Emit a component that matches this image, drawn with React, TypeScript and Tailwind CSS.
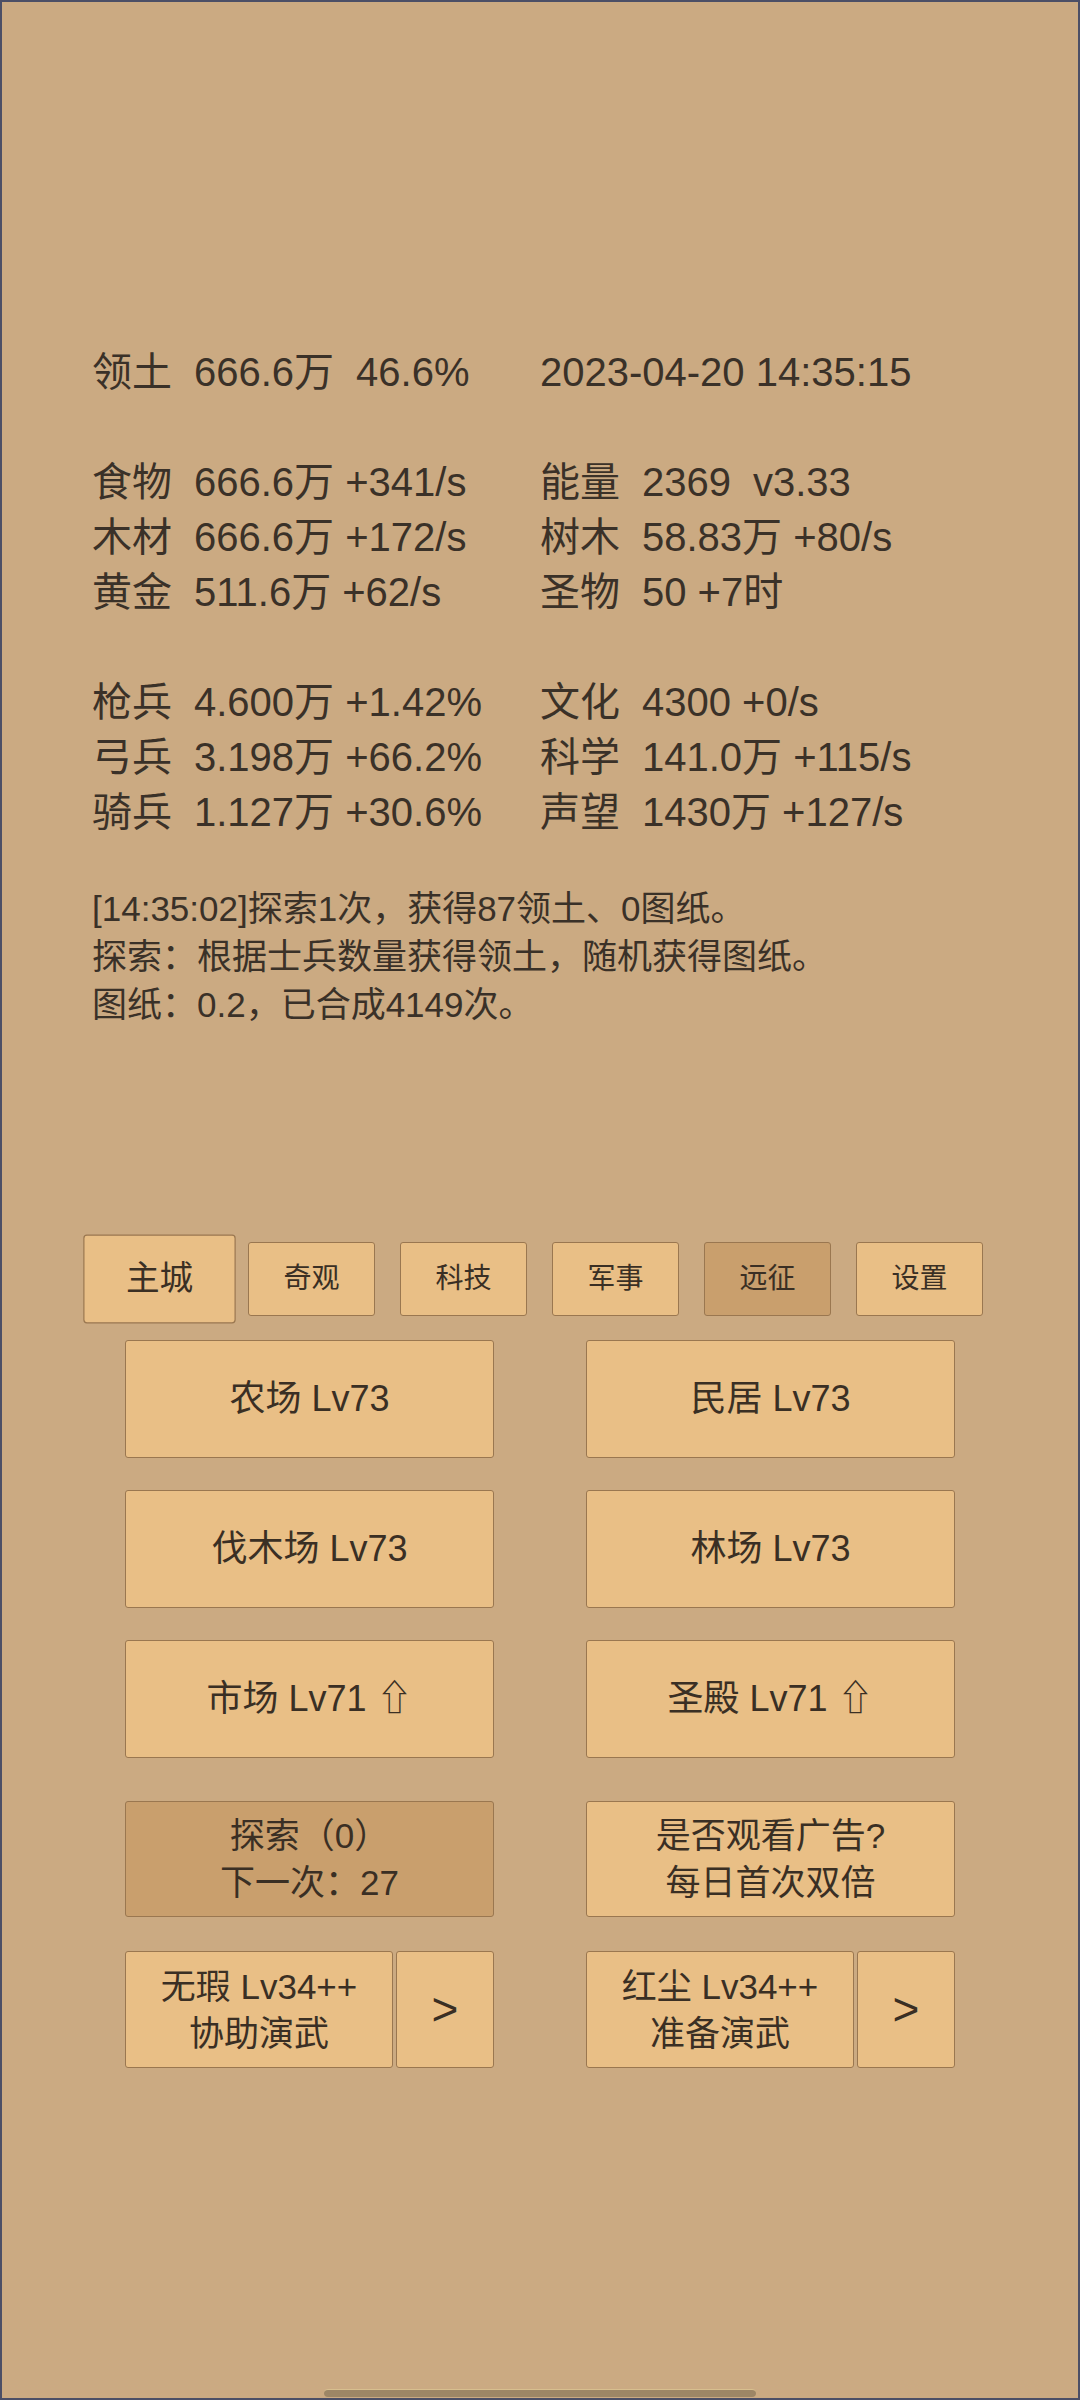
import React from 'react';

const stats: { label: string; value: string; extra?: string }[][] = [
  [
    { label: '领土', value: '666.6万', extra: '46.6%' },
    { label: '', value: '2023-04-20 14:35:15' },
  ],
  [],
  [
    { label: '食物', value: '666.6万 +341/s' },
    { label: '能量', value: '2369', extra: 'v3.33' },
  ],
  [
    { label: '木材', value: '666.6万 +172/s' },
    { label: '树木', value: '58.83万 +80/s' },
  ],
  [
    { label: '黄金', value: '511.6万 +62/s' },
    { label: '圣物', value: '50 +7时' },
  ],
  [],
  [
    { label: '枪兵', value: '4.600万 +1.42%' },
    { label: '文化', value: '4300 +0/s' },
  ],
  [
    { label: '弓兵', value: '3.198万 +66.2%' },
    { label: '科学', value: '141.0万 +115/s' },
  ],
  [
    { label: '骑兵', value: '1.127万 +30.6%' },
    { label: '声望', value: '1430万 +127/s' },
  ],
];

const tabs = ['主城', '奇观', '科技', '军事', '远征', '设置'];

const buildings = ['农场 Lv73', '民居 Lv73', '伐木场 Lv73', '林场 Lv73', '市场 Lv71 ⇧', '圣殿 Lv71 ⇧'];

// shared button look, background is added per button
const btn = 'border border-[#9a7750] rounded-[3px] flex flex-col items-center justify-center text-[#3a2f24]';
const light = 'bg-[#e9bf86]';
const dark = 'bg-[#c99f6d]';

function StatCell({ cell }: { cell?: { label: string; value: string; extra?: string } }) {
  if (!cell) return <div />;
  return (
    <div className="flex whitespace-pre">
      {cell.label && <span className="mr-[22px]">{cell.label}</span>}
      <span>{cell.value}</span>
      {cell.extra && <span className="ml-[22px]">{cell.extra}</span>}
    </div>
  );
}

export default function App() {
  return (
    <div
      className="relative w-[1080px] h-[2400px] bg-[#cbaa82] border-2 border-[#4c4f66] overflow-hidden text-[#3a3128]"
      style={{ fontFamily: '"Liberation Sans", "Noto Sans CJK SC", sans-serif' }}
    >
      {/* stats */}
      <div className="pt-[343px] pl-[90px] text-[40px] leading-[55px]">
        {stats.map((row, i) => (
          <div key={i} className="grid grid-cols-[448px_1fr] h-[55px]">
            <StatCell cell={row[0]} />
            <StatCell cell={row[1]} />
          </div>
        ))}
      </div>

      {/* log */}
      <div className="mt-[45px] pl-[90px] text-[35px] leading-[48px]">
        <div>[14:35:02]探索1次，获得87领土、0图纸。</div>
        <div>探索：根据士兵数量获得领土，随机获得图纸。</div>
        <div>图纸：0.2，已合成4149次。</div>
      </div>

      {/* tabs */}
      <div className="mt-[213px] pl-[94px] flex gap-[25px]">
        {tabs.map((t, i) => (
          <div
            key={t}
            className={`w-[127px] h-[74px] text-[28px] ${btn} ${i === 0 ? 'scale-[1.2]' : ''} ${
              i === 4 ? dark : light
            }`}
          >
            {t}
          </div>
        ))}
      </div>

      {/* buildings */}
      <div className="mt-[24px] grid grid-cols-[369px_369px] justify-center gap-x-[92px] gap-y-[32px]">
        {buildings.map((b) => (
          <div key={b} className={`h-[118px] text-[36px] ${btn} ${light}`}>
            <span className="whitespace-pre">{b}</span>
          </div>
        ))}
      </div>

      <div className="mt-[43px] grid grid-cols-[369px_369px] justify-center gap-x-[92px]">
        <div className={`h-[116px] text-[35px] leading-[47px] ${btn} ${dark}`}>
          <span>探索（0）</span>
          <span>下一次：27</span>
        </div>
        <div className={`h-[116px] text-[35px] leading-[47px] ${btn} ${light}`}>
          <span>是否观看广告?</span>
          <span>每日首次双倍</span>
        </div>
      </div>

      <div className="mt-[34px] grid grid-cols-[369px_369px] justify-center gap-x-[92px]">
        {[
          ['无瑕 Lv34++', '协助演武'],
          ['红尘 Lv34++', '准备演武'],
        ].map(([a, b]) => (
          <div key={a} className="flex gap-[3px] h-[117px]">
            <div className={`w-[268px] text-[35px] leading-[47px] ${btn} ${light}`}>
              <span>{a}</span>
              <span>{b}</span>
            </div>
            <div className={`flex-1 text-[46px] ${btn} ${light}`}>&gt;</div>
          </div>
        ))}
      </div>

      {/* home indicator */}
      <div className="absolute bottom-[1px] left-[322px] w-[432px] h-[8px] rounded-full bg-[#9d8666] border-t border-[#d8bf8e]" />
    </div>
  );
}
